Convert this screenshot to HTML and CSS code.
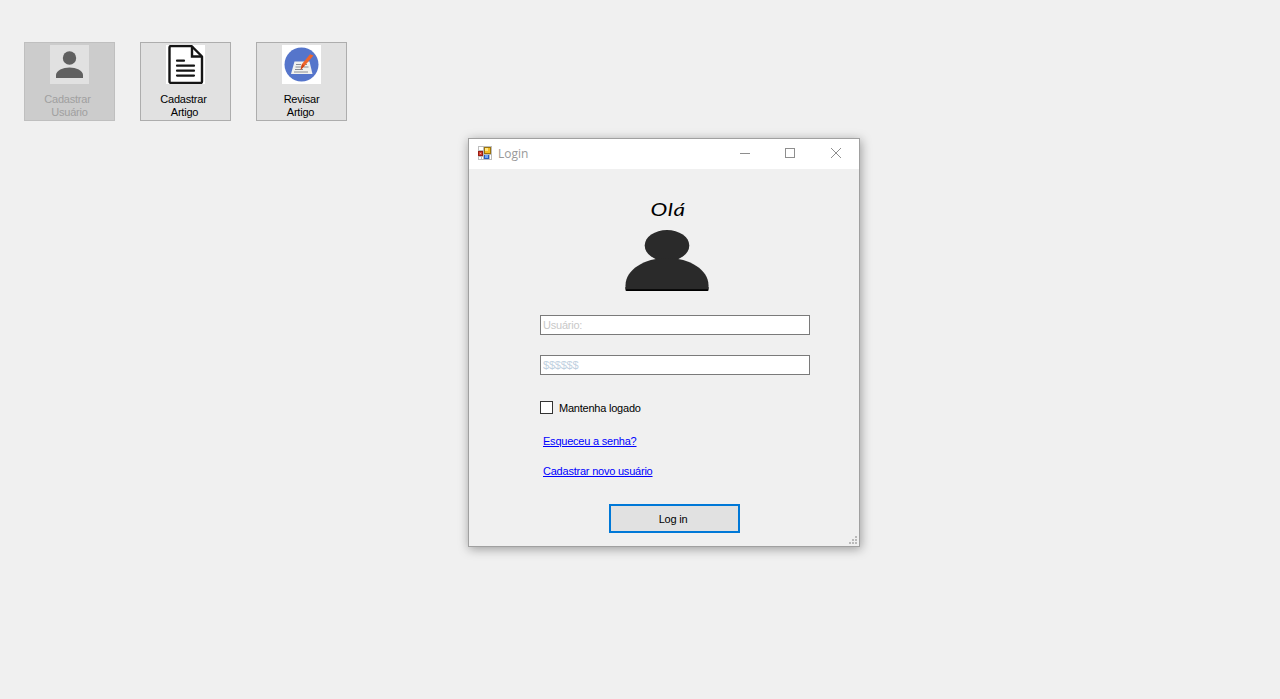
FILE: index.html
```html
<!DOCTYPE html>
<html lang="pt-BR">
<head>
<meta charset="utf-8">
<title>Login</title>
<link rel="stylesheet" href="styles.css">
</head>
<body>
<nav class="toolbar">
  <button class="tool" disabled>
    <svg class="tool-icon" width="39" height="39" viewBox="0 0 39 39"><path fill="#e1e1e1" d="M0 0h39v39H0z"/><circle cx="19.500" cy="13" r="6.700" fill="#606060"/><path fill="#606060" d="M6 33v-3c0-4.500 7-7.500 13.500-7.500S33 25.500 33 30v3z"/></svg>
    <span class="tool-line shift-left">Cadastrar</span><span class="tool-line">Usuário</span>
  </button>
  <button class="tool">
    <svg class="tool-icon" width="39" height="39" viewBox="0 0 39 39"><path fill="#fff" d="M0 0h39v39H0z"/><path d="M5 1h20.500L36 11.500V36.500q0 1.500-1.500 1.500h-29Q3.500 38 3.500 36.500v-34Q3.500 1 5 1z" fill="#fff" stroke="#151515" stroke-width="2.400" stroke-linejoin="round"/><path d="M26 1v10.500h10" fill="none" stroke="#151515" stroke-width="2.400"/><path d="M11 15.700h7M11 20.700h17M11 25.700h17M11 30.600h17" stroke="#151515" stroke-width="2.200" stroke-linecap="round"/></svg>
    <span class="tool-line shift-left">Cadastrar</span><span class="tool-line shift-small">Artigo</span>
  </button>
  <button class="tool">
    <svg class="tool-icon" width="39" height="39" viewBox="0 0 39 39"><path fill="#fff" d="M0 0h39v39H0z"/><circle cx="19.500" cy="19.500" r="17" fill="#5575cb"/><path d="M12.500 16.500h15l3 12.500H9z" fill="#f1f1ef"/><path d="M14 19.500h5M21 19.500h4M13.500 22h6M21.500 22h5M13 24.500h8M12 27h14" stroke="#8b8e96" stroke-width="1"/><path d="M28 9.300 31.500 10.500 22.500 21l-4 4 1.500-6z" fill="#f0652b"/><path d="m20 19 2.500 2-4 4z" fill="#ce4317"/></svg>
    <span class="tool-line">Revisar</span><span class="tool-line shift-small">Artigo</span>
  </button>
</nav>

<section class="window">
  <header class="titlebar">
    <svg class="app-icon" width="14" height="14" viewBox="0 0 14 14" shape-rendering="crispEdges"><path fill="#bdbdbd" d="M0 0h14v14H0z"/><path fill="#fff" d="M1 1h4v3H1zM1 11h2v2H1zM4 11h1v2H4zM12 9h1v4h-1z"/><path fill="#971d14" d="M0 5h5v5H0z"/><path fill="#d84632" d="M1 6h3v3H1z"/><path fill="#f5aaa0" d="M2 7h1v1H2z"/><path fill="#9b730e" d="M6 1h7v7H6z"/><path fill="#f5bd25" d="M7 2h5v5H7z"/><path fill="#ffe681" d="M7 2h3v3H7z"/><path fill="#285bbd" d="M6 9h5v4H6z"/><path fill="#70a7f3" d="M7 9h3v3H7z"/></svg>
    <span class="title">Login</span>
    <svg class="controls" width="102" height="10" viewBox="0 0 102 10" fill="none" stroke="#8e8e8e"><path d="M0 5.500h10M45.500.5h9v9h-9z" shape-rendering="crispEdges"/><path d="m91 0 10 10M101 0 91 10"/></svg>
  </header>
  <main class="content">
    <div class="hero">
      <h1 class="greeting">Olá</h1>
      <svg class="avatar" width="84" height="62" viewBox="0 0 84 62"><path fill="#000" d="M.5 57h83v3q0 1-1 1h-81q-1 0-1-1z"/><ellipse cx="42" cy="15.500" rx="22.300" ry="15.500" fill="#2a2a2a"/><path fill="#2a2a2a" d="M.5 59.200v-4C.5 40 19 28 42 28s41.500 12 41.500 27.200v4z"/></svg>
    </div>
    <form class="login">
      <input class="field" type="text" placeholder="Usuário:">
      <input class="field secret" type="text" placeholder="$$$$$$">
      <label class="remember"><input class="check" type="checkbox"><span class="remember-text">Mantenha logado</span></label>
      <a class="link forgot" href="#">Esqueceu a senha?</a>
      <a class="link register" href="#">Cadastrar novo usuário</a>
      <button class="submit" type="button">Log in</button>
    </form>
  </main>
  <svg class="grip" width="8" height="8" viewBox="0 0 8 8" fill="#bababa" shape-rendering="crispEdges"><path d="M6 0h2v2H6zM3 3h2v2H3zM6 3h2v2H6zM0 6h2v2H0zM3 6h2v2H3zM6 6h2v2H6z"/></svg>
</section>
</body>
</html>
```
FILE: styles.css
```css
* { box-sizing: border-box; }
body {
  margin: 0;
  height: 699px;
  overflow: hidden;
  background: #f0f0f0;
  color: #000;
  font: 11px/13px "Liberation Sans", Arial, sans-serif;
  letter-spacing: -0.22px;
}
button, input { font: inherit; letter-spacing: inherit; color: inherit; }
.toolbar { display: flex; gap: 25px; padding: 42px 24px 0; }
.tool {
  display: flex;
  flex-direction: column;
  align-items: center;
  width: 91px;
  height: 79px;
  padding: 2px 0 0;
  border: 1px solid #adadad;
  background: #e1e1e1;
}
.tool:disabled { background: #ccc; border-color: #bfbfbf; color: #a0a0a0; }
.tool-icon { margin-bottom: 9px; flex: none; }
.tool-line { display: block; }
.shift-left { margin-right: 4px; }
.shift-small { margin-right: 2px; }
.window {
  position: absolute;
  left: 468px;
  top: 138px;
  width: 392px;
  height: 409px;
  border: 1px solid #a0a0a0;
  background: #f0f0f0;
  box-shadow: 1px 2px 10px rgba(0, 0, 0, 0.36);
}
.titlebar {
  display: flex;
  align-items: center;
  height: 30px;
  padding: 0 17px 0 9px;
  background: #fff;
}
.app-icon { margin-bottom: 2px; }
.title {
  margin-left: 6px;
  color: #999;
  font: 12px/16px "Open Sans", "Noto Sans", sans-serif;
  letter-spacing: 0;
}
.controls { margin: 0 0 2px auto; }
.content { padding: 28px 49px 0 71px; }
.hero { display: flex; flex-direction: column; align-items: center; width: 254px; }
.greeting {
  margin: 0 0 9px 2px;
  font: italic 400 18px/24px Lato, sans-serif;
  letter-spacing: 0.5px;
  transform: scaleX(1.25);
}
.login { display: flex; flex-direction: column; align-items: flex-start; margin-top: 23px; }
.field {
  width: 270px;
  height: 20px;
  margin: 0 0 20px;
  padding: 0 2px;
  border: 1px solid #7a7a7a;
  background: #fff;
}
.field::placeholder { color: #c8c8c8; opacity: 1; }
.secret::placeholder { color: #bfd0e0; }
.remember { display: flex; align-items: center; gap: 6px; height: 13px; margin-top: 6px; }
.remember-text { padding-top: 1px; }
.check {
  appearance: none;
  width: 13px;
  height: 13px;
  margin: 0;
  border: 1px solid #333;
  background: #fff;
}
.link { margin-left: 3px; color: #00f; text-decoration: underline; }
.forgot { margin-top: 21px; }
.register { margin-top: 17px; }
.submit {
  width: 131px;
  height: 29px;
  margin: 26px 0 0 69px;
  padding: 1px 3px 0 0;
  border: 2px solid #0078d7;
  background: #e1e1e1;
}
.grip { position: absolute; right: 2px; bottom: 2px; }
```
